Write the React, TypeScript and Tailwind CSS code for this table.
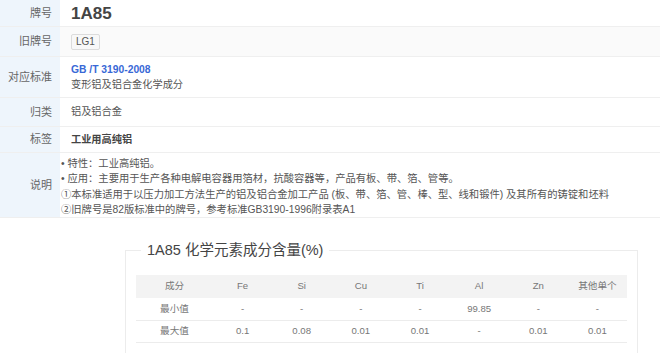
import React from "react"

const font = { fontFamily: '"Liberation Sans", "Noto Sans CJK SC", sans-serif' }

const cols = ["成分", "Fe", "Si", "Cu", "Ti", "Al", "Zn", "其他单个"]
const minRow = ["最小值", "-", "-", "-", "-", "99.85", "-", "-"]
const maxRow = ["最大值", "0.1", "0.08", "0.01", "0.01", "-", "0.01", "0.01"]

const Row = ({ label, h, gray, children }: { label: string, h: string, gray?: boolean, children: React.ReactNode }) => (
    <div className={`flex border-b border-[#efefef] ${h} ${gray ? 'bg-[#fafafa]' : 'bg-white'}`}>
        <div className="w-[60px] shrink-0 bg-[#eef5fc] flex items-center justify-end pr-[8px] text-[11px] text-[#666]">{label}</div>
        <div className="flex-1 flex flex-col justify-center pl-[11px]">{children}</div>
    </div>
)

const App = () => {
    return (
        <div className="w-[660px] h-[353px] bg-white overflow-hidden text-[#555]" style={font}>
            <Row label="牌号" h="h-[27px]">
                <p className="text-[17px] font-bold text-[#444] leading-none">1A85</p>
            </Row>
            <Row label="旧牌号" h="h-[30px]" gray>
                <span className="self-start border border-[#dcdcdc] bg-[#f8f8f8] rounded-[2px] px-[4px] h-[16px] leading-[14px] text-[10px] text-[#555]">LG1</span>
            </Row>
            <Row label="对应标准" h="h-[41px]">
                <p className="text-[10.3px] font-bold text-[#3868d6] leading-[15px]">GB /T 3190-2008</p>
                <p className="text-[10.2px] leading-[16px] text-[#555]">变形铝及铝合金化学成分</p>
            </Row>
            <Row label="归类" h="h-[29px]">
                <p className="text-[10.2px] text-[#555]">铝及铝合金</p>
            </Row>
            <Row label="标签" h="h-[26px]">
                <p className="text-[10.2px] font-bold text-[#444]">工业用高纯铝</p>
            </Row>
            <Row label="说明" h="h-[65px]">
                <div className="text-[10.3px] leading-[15.5px] text-[#555] -ml-[10px] pt-[3px] whitespace-nowrap">
                    <p>• 特性：工业高纯铝。</p>
                    <p>• 应用：主要用于生产各种电解电容器用箔材，抗酸容器等，产品有板、带、箔、管等。</p>
                    <p>①本标准适用于以压力加工方法生产的铝及铝合金加工产品 (板、带、箔、管、棒、型、线和锻件) 及其所有的铸锭和坯料</p>
                    <p>②旧牌号是82版标准中的牌号，参考标准GB3190-1996附录表A1</p>
                </div>
            </Row>

            <div className="pl-[125px] pr-[22px] pt-[22px]">
                <fieldset className="border border-[#ececec] px-[10px] pb-[10px]">
                    <legend className="ml-[5px] px-[6px] text-[14.5px] text-[#444] leading-[20px]">1A85 化学元素成分含量(%)</legend>
                    <table className="w-full table-fixed mt-[15px] border-collapse text-[9.6px] text-[#777]">
                        <thead>
                            <tr className="bg-[#f3f3f3] h-[23px]">
                                {cols.map((c, i) => (
                                    <th key={c} className={`font-normal ${i === 0 ? 'w-[77px]' : ''}`}>{c}</th>
                                ))}
                            </tr>
                        </thead>
                        <tbody>
                            {[minRow, maxRow].map((row, r) => (
                                <tr key={r} className="h-[22px] border-b border-[#ececec]">
                                    {row.map((v, i) => (
                                        <td key={i} className="text-center">{v}</td>
                                    ))}
                                </tr>
                            ))}
                        </tbody>
                    </table>
                </fieldset>
            </div>
        </div>
    )
}

export default App
